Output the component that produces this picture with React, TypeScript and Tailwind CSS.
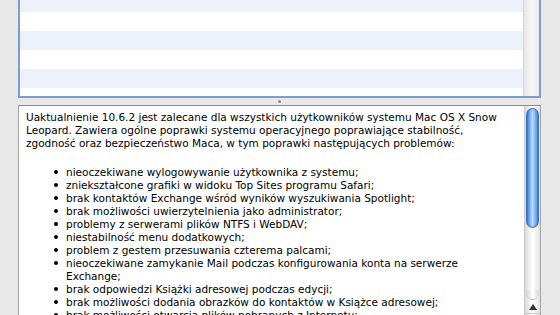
import React from "react";

const intro = [
  "Uaktualnienie 10.6.2 jest zalecane dla wszystkich użytkowników systemu Mac OS X Snow",
  "Leopard. Zawiera ogólne poprawki systemu operacyjnego poprawiające stabilność,",
  "zgodność oraz bezpieczeństwo Maca, w tym poprawki następujących problemów:",
];

const fixes: string[][] = [
  ["nieoczekiwane wylogowywanie użytkownika z systemu;"],
  ["zniekształcone grafiki w widoku Top Sites programu Safari;"],
  ["brak kontaktów Exchange wśród wyników wyszukiwania Spotlight;"],
  ["brak możliwości uwierzytelnienia jako administrator;"],
  ["problemy z serwerami plików NTFS i WebDAV;"],
  ["niestabilność menu dodatkowych;"],
  ["problem z gestem przesuwania czterema palcami;"],
  ["nieoczekiwane zamykanie Mail podczas konfigurowania konta na serwerze", "Exchange;"],
  ["brak odpowiedzi Książki adresowej podczas edycji;"],
  ["brak możliwości dodania obrazków do kontaktów w Książce adresowej;"],
  ["brak możliwości otwarcia plików pobranych z Internetu;"],
];

const App: React.FC = () => {
  return (
    <div className="w-[560px] h-[315px] overflow-hidden bg-[#e8e8e8] flex flex-col pl-[18px] pr-[19px] font-['DejaVu_Sans',sans-serif]">
      {/* Top - table view with focus ring */}
      <div className="h-[98px] shrink-0 flex border-2 border-t-0 border-[#7e9dcf] bg-white overflow-hidden">
        <div className="flex-1 flex flex-col -mt-[7px]">
          {[0, 1, 2, 3, 4, 5].map((i) => (
            <div key={i} className={`h-[19px] shrink-0 ${i % 2 === 0 ? "bg-[#ecf1fb]" : "bg-white"}`} />
          ))}
        </div>
        <div className="w-[16px] shrink-0 bg-gradient-to-r from-[#e6e6e6] via-[#f7f7f7] to-[#ececec] border-l border-[#d6d6d6]" />
      </div>

      {/* Splitter */}
      <div className="h-[7px] shrink-0 flex items-center justify-center">
        <div className="w-[3px] h-[3px] rounded-full bg-[#8a8a8a]" />
      </div>

      {/* Bottom - release notes */}
      <div className="h-[240px] shrink-0 flex border border-[#a3a3a3] border-t-[#8c8c8c] bg-white">
        <div className="flex-1 pl-[7px] pt-[5px] text-[10.5px] leading-[13px] text-black whitespace-nowrap overflow-hidden">
          {intro.map((l) => (
            <div key={l}>{l}</div>
          ))}
          <div className="mt-[16px] pl-[28px]">
            {fixes.map((lines) => (
              <div key={lines[0]} className="relative pl-[12px]">
                <span className="absolute left-0 top-[4px] w-[4px] h-[4px] rounded-full bg-black" />
                {lines.map((l) => (
                  <div key={l}>{l}</div>
                ))}
              </div>
            ))}
          </div>
        </div>

        {/* Aqua scroller */}
        <div className="w-[16px] shrink-0 flex flex-col border-l border-[#c8c8c8] bg-gradient-to-r from-[#dcdcdc] via-[#ffffff] to-[#e4e4e4]">
          <div className="h-[2px]" />
          <div className="mx-[1px] h-[120px] rounded-full border border-[#3a6fbf] bg-gradient-to-r from-[#3d7fd8] via-[#b7dcfb] to-[#4a8ade] shadow-[inset_0_0_2px_rgba(0,0,0,0.3)]" />
          <div className="h-[62px]" />
          <div className="mx-[1px] h-[10px] rounded-b-full bg-gradient-to-r from-[#d0d0d0] via-white to-[#d8d8d8] border-b border-[#bdbdbd]" />
          <div className="h-[14px] flex items-center justify-center border-b border-[#c8c8c8]">
            <div className="w-0 h-0 border-l-[4px] border-r-[4px] border-b-[6px] border-l-transparent border-r-transparent border-b-[#333]" />
          </div>
          <div className="h-[14px] flex items-center justify-center">
            <div className="w-0 h-0 border-l-[4px] border-r-[4px] border-t-[6px] border-l-transparent border-r-transparent border-t-[#333]" />
          </div>
        </div>
      </div>
    </div>
  );
};

export default App;
